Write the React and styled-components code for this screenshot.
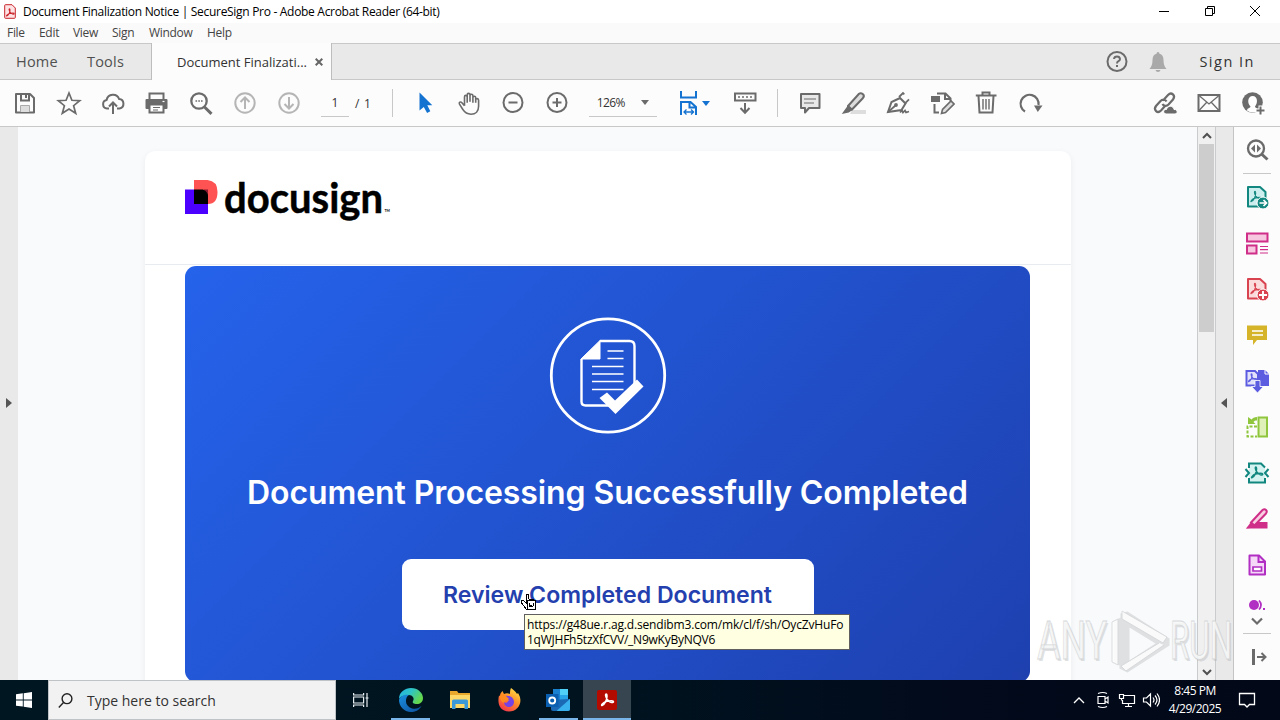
import React from 'react';
import styled, { createGlobalStyle, css } from 'styled-components';

const colors = {
  icon: '#6b6b6b',
  line: '#c8c8c8',
  chrome: '#e9e9e9',
  surface: '#fcfcfc',
  blue: '#1473d1',
};

const GlobalStyle = createGlobalStyle`
  * {
    box-sizing: border-box;
  }
  body {
    margin: 0;
    font-family: 'Open Sans', 'Noto Sans', sans-serif;
    font-size: 12px;
    color: #333;
    overflow: hidden;
  }
  svg {
    display: block;
    flex: none;
  }
`;

const Screen = styled.div`
  display: flex;
  flex-direction: column;
  position: relative;
  width: 1280px;
  height: 720px;
  overflow: hidden;
  background: #fff;
`;

const Label = styled.span`
  white-space: pre;
  letter-spacing: ${({ $spacing }) => $spacing || 0}px;
`;

/* ---------- window chrome ---------- */

const TitleBar = styled.header`
  display: flex;
  align-items: center;
  height: 23px;
  padding-left: 4px;
  padding-right: 2px;
  color: #000;
  background: #fff;

  ${Label} {
    margin-left: 7px;
    flex: 1;
  }
`;

const WindowButton = styled.div`
  display: flex;
  width: 45.5px;
  height: 21px;
  padding-bottom: 1px;
  align-items: center;
  justify-content: center;
`;

const MenuBar = styled.nav`
  display: flex;
  height: 20px;
  padding-left: 7px;
  background: #fafafa;
`;

const MenuItem = styled.span`
  width: ${({ $width }) => $width}px;
  line-height: 19px;
  letter-spacing: -0.3px;
  color: #444;
`;

const TabBar = styled.div`
  display: flex;
  align-items: center;
  height: 37px;
  border-top: 1px solid ${colors.line};
  border-bottom: 1px solid ${colors.line};
  background: ${colors.chrome};
  font-size: 14.5px;
  color: #505050;
`;

const AppTab = styled.div`
  width: ${({ $width }) => $width}px;
  padding-left: 16px;
  letter-spacing: 0.2px;
`;

const DocumentTab = styled.div`
  display: flex;
  align-items: center;
  height: 37px;
  width: 181px;
  padding-left: 25px;
  border-left: 1px solid #bdbdbd;
  border-right: 1px solid #bdbdbd;
  background: ${colors.surface};
  font-size: 13px;
  color: #333;

  > svg {
    margin-left: auto;
    margin-right: 8px;
  }
`;

const Account = styled.div`
  display: flex;
  align-items: center;
  margin-left: auto;
  gap: 21px;
  padding-right: 25px;
  color: #333;

  ${Label} {
    margin-left: 11px;
  }
`;

const Toolbar = styled.div`
  display: flex;
  align-items: center;
  height: 47px;
  padding: 0 5px 0 3px;
  border-bottom: 1px solid ${colors.line};
  background: ${colors.surface};
`;

const Tool = styled.div`
  display: flex;
  align-items: center;
  justify-content: center;
  width: ${({ $width }) => $width || 44}px;
  height: 46px;
`;

const FitTool = styled(Tool)`
  width: 56px;
  padding-right: 4px;
`;

const Separator = styled.div`
  width: 1px;
  height: 28px;
  margin: 0 10px 0 ${({ $before }) => $before}px;
  background: ${colors.line};
`;

const Field = styled.div`
  display: flex;
  align-items: center;
  justify-content: ${({ $between }) => ($between ? 'space-between' : 'center')};
  width: ${({ $width }) => $width}px;
  height: 27px;
  margin-left: 10px;
  margin-right: ${({ $after }) => $after}px;
  padding: ${({ $between }) => ($between ? '0 8px' : '0')};
  border-bottom: 1px solid ${colors.line};
`;

const Spacer = styled.div`
  flex: 1;
`;

/* ---------- document view ---------- */

const Workspace = styled.main`
  display: flex;
  height: 553px;
`;

const PaneHandle = styled.div`
  display: flex;
  align-items: center;
  justify-content: center;
  width: ${({ $width }) => $width}px;
  padding: 0 1px 1px 0;
  background: ${colors.chrome};
`;

const Canvas = styled.div`
  width: 1179px;
  padding: 24px 126px 0 127px;
  background: #f8fafc;
  overflow: hidden;
`;

const Page = styled.article`
  height: 600px;
  border-radius: 10px;
  background: #fff;
  box-shadow: 0 2px 7px rgba(0, 0, 0, 0.06);
`;

const PageHeader = styled.div`
  height: 114px;
  padding: 14px 0 0 40px;
  border-bottom: 1px solid #e8ebef;
`;

const Hero = styled.section`
  display: flex;
  flex-direction: column;
  align-items: center;
  height: 416px;
  margin: 1px 41px 0 40px;
  padding-top: 50px;
  border-radius: 11px;
  background: linear-gradient(135deg, #2563eb 0%, #1e40af 100%);
  font-family: Inter, sans-serif;
`;

const HeroTitle = styled.h1`
  margin: 35px 0 0;
  font-size: 32px;
  line-height: 44px;
  font-weight: 600;
  letter-spacing: -0.1px;
  white-space: nowrap;
  color: #fff;
`;

const ReviewButton = styled.div`
  width: 412px;
  height: 71px;
  margin-top: 44px;
  border-radius: 9px;
  background: #fff;
  color: #2340ae;
  font-size: 23.1px;
  line-height: 73px;
  font-weight: 600;
  text-align: center;
  white-space: nowrap;
`;

const ScrollBar = styled.div`
  display: flex;
  flex-direction: column;
  align-items: center;
  justify-content: space-between;
  width: 19px;
  border-left: 1px solid #c9cbcd;
  border-right: 1px solid #c9cbcd;
  background: #f0f0f0;
`;

const ScrollArrow = styled.div`
  display: flex;
  align-items: center;
  justify-content: center;
  width: 17px;
  height: 17px;
`;

const ScrollThumb = styled.div`
  width: 15px;
  height: 188px;
  margin-bottom: auto;
  background: #cdcdcd;
`;

const ToolRail = styled.aside`
  display: flex;
  flex-direction: column;
  align-items: center;
  width: 47px;
  border-left: 1px solid #c4c4c4;
  background: ${colors.surface};
`;

const RailCell = styled.div`
  display: flex;
  flex: none;
  align-items: ${({ $align }) => $align || 'center'};
  justify-content: center;
  width: 46px;
  height: ${({ $height }) => $height || 46}px;
`;

const RailLine = styled.div`
  width: 28px;
  height: 1px;
  background: #c8c8c8;
`;

const LinkTooltip = styled.div`
  position: absolute;
  left: 524px;
  top: 614px;
  width: 326px;
  height: 36px;
  padding: 2px 0 0 2px;
  border: 1px solid #5f5f5f;
  background: #ffffe1;
  color: #000;
  line-height: 15px;

  ${Label} {
    display: block;
  }
`;

const Pointer = styled.div`
  position: absolute;
  left: 520px;
  top: 593px;
`;

const Watermark = styled.div`
  position: absolute;
  left: 1034px;
  top: 594px;
`;

/* ---------- taskbar ---------- */

const Taskbar = styled.footer`
  display: flex;
  align-items: stretch;
  height: 40px;
  background: linear-gradient(90deg, #001722 0%, #00131f 48%, #020a1b 75%, #020817 100%);
  color: #fff;
`;

const StartButton = styled.div`
  display: flex;
  align-items: center;
  justify-content: center;
  width: 48px;
`;

const SearchBox = styled.div`
  display: flex;
  align-items: center;
  width: 288px;
  padding-left: 9px;
  gap: 14px;
  border: 1px solid #bfc3c5;
  background: #f2f2f2;
  color: #333;
  font-size: 14px;
`;

const TaskItem = styled.div`
  display: flex;
  align-items: center;
  justify-content: center;
  width: ${({ $width }) => $width || 49}px;
  height: 40px;
  ${({ $running, $active }) =>
    $running &&
    css`
      background: ${$active ? '#36454f' : 'transparent'};
      background-image: linear-gradient(#79b5e8, #79b5e8);
      background-size: ${$active ? '100%' : '39px'} 2px;
      background-position: center bottom;
      background-repeat: no-repeat;
    `}
`;

const Clock = styled.div`
  width: 64px;
  padding-top: 2px;
  line-height: 18px;
  text-align: center;
`;

/* ---------- icons ---------- */

const Icon = ({ size = 26, color = colors.icon, stroke = 2, children }) => (
  <svg
    width={size}
    height={size}
    viewBox={`0 0 ${size} ${size}`}
    fill="none"
    stroke={color}
    strokeWidth={stroke}
  >
    {children}
  </svg>
);

const ICONS = {
  save: (
    <>
      <path d="M4 4h14l4 4v14.500H4z" strokeLinejoin="round" />
      <path d="M9 4v6.500h8V4" />
      <path d="M8.500 22v-6.500h9V22" fill="#ddd" stroke="#aaa" strokeWidth="1" />
      <path d="M14 5v3" />
    </>
  ),
  star: <path d="M13 3l2.900 7.300 7.800.4-6.100 5 2.100 7.600L13 19l-6.700 4.300 2.100-7.600-6.100-5 7.800-.4z" strokeWidth="1.700" />,
  cloud: (
    <>
      <path d="M9 18.500H7a4.300 4.300 0 0 1-.4-8.500 6.500 6.500 0 0 1 12.500-1 4.800 4.800 0 0 1 .4 9.500H17" />
      <path d="M13 24V12.500M9 16.500l4-4 4 4" />
    </>
  ),
  print: (
    <g transform="translate(-1 0)">
      <path d="M6.500 9V3.500h14V9" />
      <path d="M3.500 9h20q1 0 1 1v8q0 1-1 1h-20q-1 0-1-1v-8q0-1 1-1z" fill={colors.icon} stroke="none" />
      <path d="M6.500 14.500h14v8h-14z" fill="#fff" />
      <path d="M10 17.500h7M10 20h5" strokeWidth="1.200" />
      <path d="M19.500 11.500h2" stroke="#fff" strokeWidth="1.200" />
    </g>
  ),
  find: (
    <>
      <circle cx="11" cy="11" r="7.700" strokeWidth="2.300" />
      <path d="M16.500 17l7 6.800" strokeWidth="3" />
      <path d="M7.500 11h1.600M10.300 11h1.600M13 11h1.600" strokeWidth="1.700" />
    </>
  ),
  up: (
    <>
      <circle cx="13" cy="13" r="9.700" />
      <path d="M13 19V8M8.500 12l4.500-4.500 4.500 4.500" />
    </>
  ),
  down: (
    <>
      <circle cx="13" cy="13" r="9.700" />
      <path d="M13 7v11M8.500 14l4.500 4.500 4.500-4.500" />
    </>
  ),
  arrow: <path d="M7.500 2.500v18l4.300-3.600 3.300 6 3.200-1.600-3-6h5z" fill={colors.blue} stroke="none" />,
  hand: (
    <path
      d="M8 15V6.200c0-2 2.700-2 2.700 0V12M10.700 11V4.200c0-2 2.800-2 2.800 0V11m0-6c0-2 2.900-2 2.900 0v7m0-5c0-2 2.800-2 2.800 0V12m0-2.700c0-2 2.900-1.800 2.900.2v6c0 5-3 8-7.600 8-4 0-6.200-1.500-8-4.500L3 13.500c-1-1.900 1-3 2.400-1.500L8 15"
      strokeWidth="1.600"
      transform="translate(.5 .7)"
    />
  ),
  minus: (
    <>
      <circle cx="13" cy="12.500" r="9.500" />
      <path d="M8.500 12.500h9" />
    </>
  ),
  plus: (
    <>
      <circle cx="13" cy="12.500" r="9.500" />
      <path d="M8.500 12.500h9M13 8v9" />
    </>
  ),
  fit: (
    <>
      <path d="M5 1v6.500h15V1" />
      <path d="M5 25V12h9.500l5.500 5v8M13.500 12v5.500H20" />
      <path d="M8 22h10M10.500 19.500L8 22l2.500 2.500M15 19.500l2.500 2.500-2.500 2.500" strokeWidth="1.300" />
    </>
  ),
  keyboard: (
    <>
      <path d="M3 3.500h20.500v7H3z" />
      <path d="M6 7h2M10 7h2M14 7h2M18 7h2" strokeWidth="1.500" />
      <path d="M13 13v9.500M8.500 18l4.500 4.700 4.500-4.700" />
    </>
  ),
  comment: (
    <>
      <path d="M4 4h18.500v14H12l-4 4.500V18H4z" fill="#e8e8e8" strokeLinejoin="round" />
      <path d="M7 9h12M7 13h10" strokeWidth="1.200" />
    </>
  ),
  highlight: (
    <>
      <path d="M11 20h14v4H9z" fill="#ddd" stroke="none" />
      <path d="M7 16L18 3.800q1.800-1.300 4 .4 1.800 2-.2 4L11 19.500l-4 .5z" fill="#ddd" strokeWidth="2" />
      <path d="M7.500 16l3.500 3.500-3.500 2.300-5 1z" fill={colors.icon} strokeWidth="1.500" />
    </>
  ),
  sign: (
    <>
      <path d="M3 22L6.500 12l8.500-4 5.500 5.500-4 6.500z" strokeWidth="2" />
      <path d="M3 22l7.500-6.500M14 7l4-4 1.300 1.300M20 13.300l4-4" strokeWidth="1.800" />
      <circle cx="11" cy="15" r="1.900" fill={colors.icon} stroke="none" />
      <path d="M15 22.500l2-2 1 2 2-2 1 2 3-1" strokeWidth="1.700" />
    </>
  ),
  edit: (
    <>
      <path d="M8 3.500h8.500l5 5V11M16 3.500v5.500h5M5.500 14v8.500H10" />
      <path d="M2 6h9v6H2z" fill={colors.icon} stroke="none" />
      <path d="M12.500 23.500l1-4L22 11l3 3-8.500 8.500z" fill="#ddd" strokeWidth="1.600" />
    </>
  ),
  trash: (
    <>
      <path d="M2.800 5.500h20.700M9.500 5V2.500h7V5M5.500 6l1 16.500h13l1-16.500" />
      <path d="M10 9v10.500M13 9v10.500M16 9v10.500" strokeWidth="1.400" />
    </>
  ),
  rotate: (
    <>
      <path d="M8 21.500A9 9 0 1 1 21.500 15" strokeWidth="2.200" />
      <path d="M17 15.500h8.500L20.800 22z" fill={colors.icon} stroke="none" />
    </>
  ),
  link: (
    <>
      <path d="M11 10.500l5-5.500c3.500-3.500 8 .5 5 4.500l-4.500 5c-2 2-5 1.500-6-.5M13.500 15.500L9 20.500c-3.500 3.500-8-.5-5-4.500L8.500 11c2-2 5-1.500 6 .5" strokeWidth="2.200" />
      <path d="M14 24c-3.500-.5-3-5 .5-4.500 1-4.500 7-4 7.500 0 3.500-.5 4.500 4 1 4.500z" fill={colors.icon} stroke="#fff" strokeWidth="1" />
    </>
  ),
  mail: (
    <>
      <path d="M2.500 5h21v16h-21z" />
      <path d="M3 5.500L13 14 23 5.500M3 20.500l7.500-8M23 20.500l-7.500-8" strokeWidth="1.300" />
    </>
  ),
  user: (
    <>
      <circle cx="12.500" cy="12.500" r="10.300" fill={colors.icon} stroke="none" />
      <path d="M7 20.500c0-2.500 3.500-2.500 3.500-4C7 13 7.500 6 12.700 6S18 13 15 16.500c0 1.500 3 1.500 3.500 4-3 2.500-8.500 2.500-11.500 0z" fill="#fff" stroke="none" />
      <path d="M20.500 15.500v10M15.500 20.500h10" stroke="#fff" strokeWidth="4" />
      <path d="M20.500 16.500v8M16.500 20.500h8" />
    </>
  ),
};

const Caret = ({ color = colors.icon }) => (
  <svg width="8" height="5" viewBox="0 0 8 5">
    <path d="M0 0h8L4 5z" fill={color} />
  </svg>
);

const AcrobatGlyph = ({ color, width = 1.3 }) => (
  <path
    d="M3 14c3-1 5-6 5-9.500C8 2 6.500 2 6.600 4c.3 3 3.400 6.500 6 7 2.500.3 2.500-1.700 0-1.700C9 9.300 5 10.500 3.300 12.500 2.500 13.500 2.500 14 3 14z"
    fill="none"
    stroke={color}
    strokeWidth={width}
  />
);

const TEAL = '#12877f';
const RED = '#d9424f';
const PINK = '#cf2f88';
const PURPLE = '#b12fc2';
const INDIGO = '#5c5ce0';

const PdfSheet = ({ color, fill }) => (
  <>
    <path d="M4 3h12l5.500 5v14.500H4z" fill={fill} stroke={color} strokeLinejoin="round" />
    <g transform="translate(4.500 5) scale(.9)">
      <AcrobatGlyph color={color} width={1.2} />
    </g>
  </>
);

const RAIL = {
  search: (
    <>
      <circle cx="12" cy="11.500" r="8" stroke={colors.icon} strokeWidth="2.300" />
      <path d="M17.500 17l6 5.500" stroke={colors.icon} strokeWidth="3" />
      <path d="M11 7.500v8l-4-4zM13 7.500v8l4-4z" fill={colors.icon} stroke="none" />
    </>
  ),
  exportPdf: (
    <>
      <PdfSheet color={TEAL} fill="#cdeeee" />
      <circle cx="19" cy="19" r="6" fill={TEAL} stroke="#fff" strokeWidth="1" />
      <path d="M15.500 19h6.500M19.500 16l3 3-3 3" stroke="#fff" strokeWidth="1.700" />
    </>
  ),
  organize: (
    <>
      <path d="M3 3.500h20.500v8H3zM3 15.500h9.500v8H3z" fill="#f7c6df" stroke={PINK} />
      <path d="M16 16.500h8M16 19.700h8M16 23h8" stroke={PINK} strokeWidth="1.200" />
    </>
  ),
  create: (
    <>
      <PdfSheet color={RED} fill="#fbdcdc" />
      <circle cx="19" cy="19" r="6" fill={RED} stroke="#fff" strokeWidth="1" />
      <path d="M15 19h8M19 15v8" stroke="#fff" strokeWidth="1.900" />
    </>
  ),
  note: (
    <>
      <path d="M3 3.500h20V18H13l-4 5v-5H3z" fill="#d6b42a" stroke="none" />
      <path d="M8 9h11M8 13h11" stroke="#fff" strokeWidth="1.700" />
    </>
  ),
  combine: (
    <>
      <path d="M14 2h7l4 4v12H14z" fill={INDIGO} stroke="none" />
      <path d="M21 1v5h5" stroke="#fff" strokeWidth="1" />
      <path d="M2.500 3H11l3 3v11.500H2.500z" fill="#e2e2fb" stroke={INDIGO} />
      <g transform="translate(2.500 4) scale(.7)">
        <AcrobatGlyph color={INDIGO} width={1.600} />
      </g>
      <path d="M11 12.500h5v6h3.500L13.500 25 7.500 18.500H11z" fill={INDIGO} stroke="#fff" strokeWidth=".8" />
    </>
  ),
  pages: (
    <>
      <path d="M14.500 3.500H23v19h-8.500z" fill="#dff1b8" stroke="#8fc63d" />
      <path d="M13 12.500H3.500v10H13" stroke="#8fc63d" strokeDasharray="3 1.500" />
      <path d="M13 3c-3 0-4 1-5.500 2.500L4 3v7h7.500L9.500 8C10.500 6.500 11 6.500 13 6.500z" fill="#8fc63d" stroke="none" />
    </>
  ),
  compress: (
    <>
      <path d="M5 4h12l4 4v14.500H5z" fill="#d3f2f0" stroke="none" />
      <g transform="translate(5 4.500) scale(.95)">
        <AcrobatGlyph color={TEAL} width={1.500} />
      </g>
      <path d="M1.500 9L5 13l-3.500 4M24.500 9L21 13l3.500 4M5 8V3.500h12l4 4M5 18v4.500h16V18" stroke={TEAL} />
    </>
  ),
  redact: (
    <>
      <path d="M14 16h9.500v6.500H2L8 18z" fill={PINK} stroke="none" />
      <path d="M7 16.500L18.500 4q2-1.500 3.500 0t0 3.500L10.500 19.500z" fill="#f9cfe2" stroke={PINK} />
      <path d="M7 16l4 3.500-4 2.500-5 .5z" fill={PINK} stroke="none" />
    </>
  ),
  stamp: (
    <>
      <path d="M5.500 3.500H15l6 6v13H5.500z" fill="#f5d8f8" stroke={PURPLE} strokeLinejoin="round" />
      <path d="M14.500 3.500V10H21" stroke={PURPLE} />
      <path d="M9 15h8.500v4H9z" fill="#fff" stroke={PURPLE} strokeWidth="1.700" />
    </>
  ),
};

const RAIL_ORDER = ['exportPdf', 'organize', 'create', 'note', 'combine', 'pages', 'compress', 'redact', 'stamp'];

const AcrobatAppIcon = () => (
  <svg width="12" height="15" viewBox="0 0 12 15">
    <path d="M1.500.7H8L11.300 4v9.500q0 .8-.8.8h-9q-.8 0-.8-.8v-12q0-.8.8-.8z" fill="#fde3e3" stroke="#c9242b" />
    <g transform="translate(.8 3) scale(.65)">
      <AcrobatGlyph color="#c9242b" width={1.600} />
    </g>
  </svg>
);

const DocusignLogo = () => (
  <svg width="214" height="66" viewBox="0 -14 214 66">
    <path d="M0 10.500h23V35H0z" fill="#4c00ff" />
    <path d="M9 1h13.500q10 1 10 12 0 12-9.500 12H9z" fill="#ff5252" />
    <path d="M19 10.500h4V25h-4z" fill="#8c1a30" />
    <path d="M9 10.500h9q5 2.500 5 6.500v8H9z" fill="#000" />
    <text
      x="39"
      y="34"
      textLength="159"
      lengthAdjust="spacingAndGlyphs"
      fontFamily="Lato, sans-serif"
      fontWeight="700"
      fontSize="42.500"
      fill="#000"
      stroke="#000"
      strokeWidth=".5"
    >
      docusign
    </text>
    <text x="199.500" y="33" fontFamily="Lato, sans-serif" fontWeight="700" fontSize="3.500" fill="#000">
      TM
    </text>
  </svg>
);

const DocumentBadge = () => (
  <svg width="120" height="120" viewBox="0 0 120 120" fill="none" stroke="#fff">
    <circle cx="60" cy="59.500" r="56.700" strokeWidth="2.800" />
    <path d="M52 25h29.500q5 0 5 5V69M67 89.500H37.500q-4 0-4-4V43" strokeWidth="2.400" />
    <path d="M33 43L52 24.500V43z" fill="#fff" strokeWidth="1" />
    <path d="M59.500 35h16M59.500 42.500h16M44 50.500h31.500M44 58h31.500M44 65.500h31.500M44 73.500h31.500" strokeWidth="1.500" />
    <path d="M52 82l7.500-5.500 8 8L89.500 63.500l6.500 7-28 27.500z" fill="#fff" stroke="none" transform="translate(-.5 0)" />
  </svg>
);

const LinkCursor = () => (
  <svg width="18" height="18" viewBox="0 0 18 18" shapeRendering="crispEdges">
    <path d="M6 1h2l1 5 5 1 1 9H6L1 9V7l3 1 2 2z" fill="#fff" stroke="#000" />
    <rect x="7" y="7" width="8" height="9" fill="#fff" stroke="#000" />
    <path d="M9 10v3l1 1 1-2 1 2 1-1v-3" fill="none" stroke="#000" />
  </svg>
);

const WatermarkMark = () => (
  <svg width="210" height="86" viewBox="0 -10 210 86">
    <g fontFamily="Roboto, sans-serif" fontSize="54" fontWeight="400">
      <g fill="#a9abad" opacity=".35" transform="translate(1.500 1.500)">
        <text x="3" y="55" textLength="70" lengthAdjust="spacingAndGlyphs">ANY</text>
        <text x="136" y="55" textLength="62" lengthAdjust="spacingAndGlyphs">RUN</text>
      </g>
      <g fill="#f7f8f8" stroke="#d3d5d7" strokeWidth=".8" opacity=".9">
        <text x="3" y="55" textLength="70" lengthAdjust="spacingAndGlyphs">ANY</text>
        <text x="136" y="55" textLength="62" lengthAdjust="spacingAndGlyphs">RUN</text>
      </g>
    </g>
    <g strokeLinejoin="round">
      <path d="M78 16l7-4v-4l7-2 42 27v7L92 67l-8-4V60l-6-3zM94 22v33l26-17z" fill="#b7b9bb" fillRule="evenodd" opacity=".4" transform="translate(1.500 1.500)" />
      <path d="M78 18v40l6 3V15zM88 7l45 26-4 6-41-24zM130 41L92 67l-5-5 38-23" fill="#fff" stroke="#d6d8da" opacity=".85" />
    </g>
  </svg>
);

const EdgeIcon = () => (
  <svg width="26" height="26" viewBox="0 0 26 26">
    <defs>
      <linearGradient id="edge-top" x1="0" y1="0" x2="1" y2=".5">
        <stop offset="0" stopColor="#22b0e8" />
        <stop offset=".5" stopColor="#2fc4c4" />
        <stop offset="1" stopColor="#65d84b" />
      </linearGradient>
      <linearGradient id="edge-low" x1="0" y1="0" x2="1" y2="1">
        <stop offset="0" stopColor="#1b8fe0" />
        <stop offset="1" stopColor="#0c4f9c" />
      </linearGradient>
    </defs>
    <path d="M1 12C1 5 7 1 13 1c7 0 12 5 12 10 0 4-3 6-6 6-3.500 0-5-1-4-3 2-3-1-6-4-6-5 0-9 2-10 4z" fill="url(#edge-top)" />
    <path d="M1 13c1-4 6-6 10-5-4 2-5 11 3 13.500 4 1 7-.5 9.500-2.500C21 23.500 17 25 13 25 6 25 1 19 1 13z" fill="url(#edge-low)" />
  </svg>
);

const FolderIcon = () => (
  <svg width="24" height="22" viewBox="0 0 24 22">
    <path d="M1 2h7l1.500 2H21v6H1z" fill="#e9a92c" />
    <path d="M1 6h20v13H1z" fill="#ffd968" />
    <path d="M3 20v-8q0-1.500 1.500-1.500h13q1.500 0 1.500 1.500v8h-3.500v-5h-9v5z" fill="#3d9ad8" />
  </svg>
);

const FirefoxIcon = () => (
  <svg width="24" height="26" viewBox="1 0 24 26">
    <defs>
      <linearGradient id="fox" x1=".8" y1="0" x2=".2" y2="1">
        <stop offset="0" stopColor="#ffe14a" />
        <stop offset=".45" stopColor="#ff9227" />
        <stop offset="1" stopColor="#f2304e" />
      </linearGradient>
    </defs>
    <path d="M14 1c4 3 5 4 6 6l1-1c6 9 0 18.500-9 18.500S0 17 2 8.500L3 9c0-2 1-3.500 2.500-5L7 7c2-1 4-1 6 0 0-2 0-4 1-6z" fill="url(#fox)" />
    <path d="M8 9c5-1 9 2 9 6 0 3-2.500 5-5 5s-5-2-5-5c1 1 2 1 3 .5L12 13c-2 0-3-1-4-4z" fill="#7542e5" />
    <path d="M3 9c1-2 3-2 5-1l4 4c-1 1.500-3 1-4 2.500C7 17 3 15 3 9z" fill="#ff8a20" />
  </svg>
);

const OutlookIcon = () => (
  <svg width="26" height="24" viewBox="1 0 26 24">
    <path d="M8 1h15v14H8z" fill="#1a80d0" />
    <path d="M15 1h8v6h-8z" fill="#50d0f7" />
    <path d="M15 7h8v6h-8z" fill="#28a5e8" />
    <path d="M6 12l19-1v10q0 2-2 2H8q-2 0-2-2z" fill="#1b68b5" />
    <path d="M25 11L12 22.500V23h11q2 0 2-2z" fill="#39b1ef" />
    <path d="M1 6h12.500v13H1z" fill="#0a5fb0" />
    <circle cx="7.200" cy="12.500" r="3" fill="none" stroke="#fff" strokeWidth="1.800" />
  </svg>
);

const ReaderIcon = () => (
  <svg width="22" height="22" viewBox="0 0 22 22">
    <rect x="1" y="1" width="20" height="20" rx="2" fill="#b30b00" />
    <g transform="translate(3 2.500)">
      <AcrobatGlyph color="#fff" width={1.600} />
    </g>
  </svg>
);

const menu = [
  ['File', 32],
  ['Edit', 34],
  ['View', 39],
  ['Sign', 37],
  ['Window', 58],
  ['Help', 40],
];

const ToolIcon = ({ name, color }) => (
  <Tool>
    <Icon color={color}>{ICONS[name]}</Icon>
  </Tool>
);

const Viewer = () => (
  <Workspace>
    <PaneHandle $width={18}>
      <svg width="6" height="10" viewBox="0 0 6 10">
        <path d="M0 0v10l6-5z" fill="#555" />
      </svg>
    </PaneHandle>
    <Canvas>
      <Page>
        <PageHeader>
          <DocusignLogo />
        </PageHeader>
        <Hero>
          <DocumentBadge />
          <HeroTitle>Document Processing Successfully Completed</HeroTitle>
          <ReviewButton>Review Completed Document</ReviewButton>
        </Hero>
      </Page>
    </Canvas>
    <ScrollBar>
      <ScrollArrow>
        <Icon size={10} color="#505050">
          <path d="M1 7l4-4 4 4" />
        </Icon>
      </ScrollArrow>
      <ScrollThumb />
      <ScrollArrow>
        <Icon size={10} color="#505050">
          <path d="M1 3l4 4 4-4" />
        </Icon>
      </ScrollArrow>
    </ScrollBar>
    <PaneHandle $width={17}>
      <svg width="6" height="10" viewBox="0 0 6 10">
        <path d="M6 0v10L0 5z" fill="#555" />
      </svg>
    </PaneHandle>
    <ToolRail>
      <RailCell>
        <Icon>{RAIL.search}</Icon>
      </RailCell>
      <RailLine />
      {RAIL_ORDER.map((name) => (
        <RailCell key={name}>
          <Icon>{RAIL[name]}</Icon>
        </RailCell>
      ))}
      <RailCell $height={22} $align="flex-end">
        <svg width="20" height="10" viewBox="0 0 20 10">
          <circle cx="7" cy="5" r="5" fill={PURPLE} />
          <path d="M12 .5q4 4.500 0 9" fill="none" stroke={PURPLE} strokeWidth="1.700" />
          <path d="M16 8h2v2h-2z" fill={PURPLE} />
        </svg>
      </RailCell>
      <RailCell $height={23}>
        <Icon size={14}>
          <path d="M2 3.500l5 5 5-5" strokeWidth="2.200" />
        </Icon>
      </RailCell>
      <RailLine />
      <RailCell>
        <Icon>
          <path d="M9.500 5v16" strokeWidth="3" />
          <path d="M13 13h8.500M17.500 9l4 4-4 4" />
        </Icon>
      </RailCell>
    </ToolRail>
  </Workspace>
);

const App = () => {
  return (
    <Screen>
      <GlobalStyle />
      <TitleBar>
        <AcrobatAppIcon />
        <Label $spacing={-0.3}>
          Document Finalization Notice | SecureSign Pro - Adobe Acrobat Reader (64-bit)
        </Label>
        <WindowButton>
          <Icon size={10} color="#000" stroke={1}>
            <path d="M0 5.500h10" />
          </Icon>
        </WindowButton>
        <WindowButton>
          <Icon size={10} color="#000" stroke={1}>
            <path d="M.5 2.500h7v7h-7zM2.500 2.500v-2h7v7h-2" />
          </Icon>
        </WindowButton>
        <WindowButton>
          <Icon size={10} color="#000" stroke={1}>
            <path d="M0 0l10 10M10 0L0 10" />
          </Icon>
        </WindowButton>
      </TitleBar>
      <MenuBar>
        {menu.map(([name, width]) => (
          <MenuItem key={name} $width={width}>
            {name}
          </MenuItem>
        ))}
      </MenuBar>
      <TabBar>
        <AppTab $width={71}>Home</AppTab>
        <AppTab $width={80}>Tools</AppTab>
        <DocumentTab>
          <Label>Document Finalizati...</Label>
          <Icon size={8} color="#666">
            <path d="M.7.7l6.600 6.600M7.300.7L.7 7.300" />
          </Icon>
        </DocumentTab>
        <Account>
          <Icon size={22}>
            <circle cx="11" cy="10.500" r="9.500" />
            <path d="M8 8q.3-2.500 3-2.500T14 8q0 1.500-1.500 2.200T11 12.500M11 14v2" />
          </Icon>
          <svg width="18" height="20" viewBox="0 0 18 20">
            <path d="M9 0q1.500 0 1.500 1.700 4 1 4 6.300 0 6 3 9H.5q3-3 3-9 0-5.300 4-6.300Q7.500 0 9 0zM6.500 18h5Q11 20 9 20t-2.500-2z" fill="#a9a9a9" />
          </svg>
          <Label $spacing={1.5}>Sign In</Label>
        </Account>
      </TabBar>
      <Toolbar>
        {['save', 'star', 'cloud', 'print', 'find'].map((name) => (
          <ToolIcon key={name} name={name} />
        ))}
        <ToolIcon name="up" color="#b5b5b5" />
        <ToolIcon name="down" color="#b5b5b5" />
        <Field $width={28} $after={6}>
          1
        </Field>
        <Label $spacing={0.8}>/ 1</Label>
        <Separator $before={20} />
        {['arrow', 'hand', 'minus', 'plus'].map((name) => (
          <ToolIcon key={name} name={name} />
        ))}
        <Field $width={68} $after={10} $between>
          <Label $spacing={-0.6}>126%</Label>
          <Caret />
        </Field>
        <FitTool>
          <Icon color={colors.blue}>{ICONS.fit}</Icon>
          <Caret color={colors.blue} />
        </FitTool>
        <ToolIcon name="keyboard" />
        <Separator $before={10} />
        {['comment', 'highlight', 'sign', 'edit', 'trash', 'rotate'].map((name) => (
          <ToolIcon key={name} name={name} />
        ))}
        <Spacer />
        {['link', 'mail', 'user'].map((name) => (
          <ToolIcon key={name} name={name} />
        ))}
      </Toolbar>
      <Viewer />
      <Taskbar>
        <StartButton>
          <svg width="16" height="16" viewBox="0 0 16 16">
            <path d="M0 2.200L6.800 1.300v6.200H0zM7.700 1.200L16 0v7.500H7.700zM0 8.400h6.800v6.200L0 13.700zM7.700 8.400H16V16l-8.300-1.200z" fill="#fff" />
          </svg>
        </StartButton>
        <SearchBox>
          <Icon size={15} color="#222" stroke={1.4}>
            <circle cx="9" cy="5.700" r="4.900" />
            <path d="M5.500 9.500L.8 14.500" />
          </Icon>
          <Label>Type here to search</Label>
        </SearchBox>
        <TaskItem $width={49}>
          <Icon size={16} color="#e8eef0" stroke={1.2}>
            <path d="M.6 1v2h10V1M.6 15v-2h10v2M.6 5h10v6H.6zM14 1v14M12.500 6h3" />
          </Icon>
        </TaskItem>
        <TaskItem $width={51} $running>
          <EdgeIcon />
        </TaskItem>
        <TaskItem>
          <FolderIcon />
        </TaskItem>
        <TaskItem>
          <FirefoxIcon />
        </TaskItem>
        <TaskItem $running>
          <OutlookIcon />
        </TaskItem>
        <TaskItem $width={48} $running $active>
          <ReaderIcon />
        </TaskItem>
        <Spacer />
        <TaskItem $width={24}>
          <Icon size={12} color="#fff" stroke={1.3}>
            <path d="M1 9l5-5 5 5" />
          </Icon>
        </TaskItem>
        <TaskItem $width={24}>
          <Icon size={18} color="#fff" stroke={1.2}>
            <path d="M4 5.500h7v7H4zM11 8l3-2v6l-3-2M4 2.500q5-2 9 0M4 15.500q5 2 9 0" />
          </Icon>
        </TaskItem>
        <TaskItem $width={24}>
          <Icon size={18} color="#fff" stroke={1.2}>
            <path d="M6 4.500h10.500v8H4.500V9M10.500 12.500v3M7 15.500h7M1.500 3.500h4v4h-4zM3.500 7.500v2" />
          </Icon>
        </TaskItem>
        <TaskItem $width={24}>
          <Icon size={18} color="#fff" stroke={1.2}>
            <path d="M1.500 7h3l4-4v12l-4-4h-3zM11 6.500q2 2.500 0 5M13 4.500q4 4.500 0 9M15 2.500q5 6.500 0 13" />
          </Icon>
        </TaskItem>
        <Clock>
          <Label $spacing={-0.5}>8:45 PM{'\n'}4/29/2025</Label>
        </Clock>
        <TaskItem $width={40}>
          <Icon size={18} color="#fff" stroke={1.3}>
            <path d="M1.500 2.500h15v11h-5L9 16l-2.500-2.500h-5z" />
          </Icon>
        </TaskItem>
        <TaskItem $width={13} />
      </Taskbar>
      <Pointer>
        <LinkCursor />
      </Pointer>
      <LinkTooltip>
        <Label $spacing={-0.16}>https://g48ue.r.ag.d.sendibm3.com/mk/cl/f/sh/OycZvHuFo</Label>
        <Label $spacing={-0.24}>1qWJHFh5tzXfCVV/_N9wKyByNQV6</Label>
      </LinkTooltip>
      <Watermark>
        <WatermarkMark />
      </Watermark>
    </Screen>
  );
};

export default App;
